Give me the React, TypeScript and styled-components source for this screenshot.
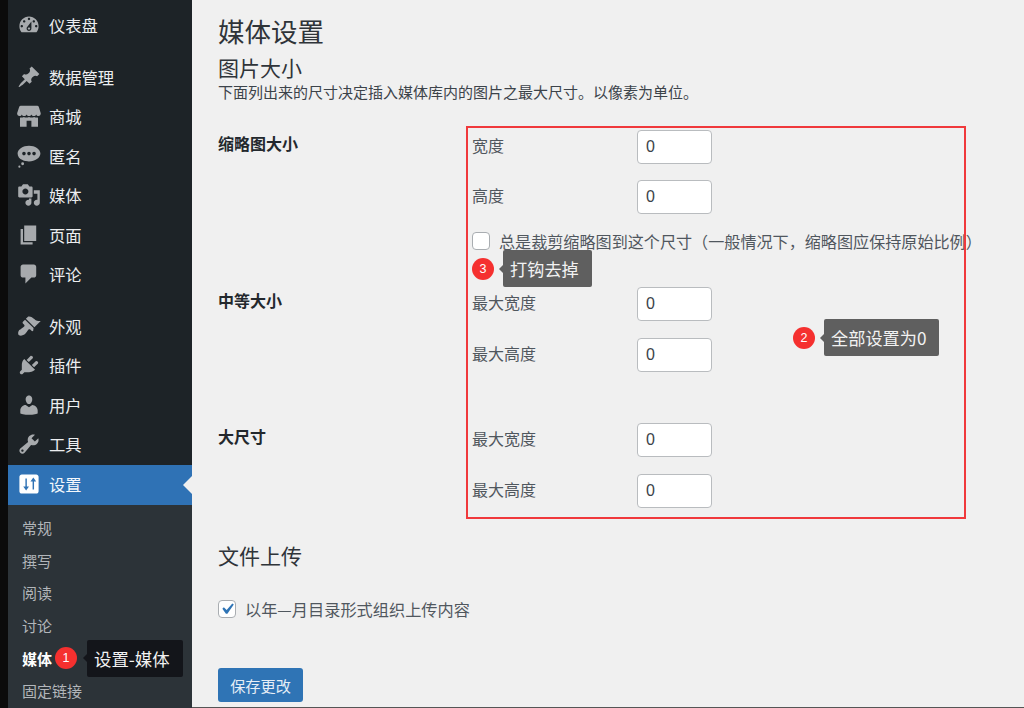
import React from 'react';
import styled, {createGlobalStyle} from 'styled-components';

const icons: Record<string, React.ReactNode> = {
    dashboard: <path fillRule="evenodd" d="M3.76 16h12.48c1.1-1.37 1.76-3.11 1.76-5 0-4.42-3.58-8-8-8s-8 3.58-8 8c0 1.89.66 3.63 1.76 5zM10 4c.55 0 1 .45 1 1s-.45 1-1 1-1-.45-1-1 .45-1 1-1zM6 6c.55 0 1 .45 1 1s-.45 1-1 1-1-.45-1-1 .45-1 1-1zm8 0c.55 0 1 .45 1 1s-.45 1-1 1-1-.45-1-1 .45-1 1-1zm-5.37 5.55L12 7v6c0 1.1-.9 2-2 2s-2-.9-2-2c0-.57.24-1.08.63-1.45zM4 10c.55 0 1 .45 1 1s-.45 1-1 1-1-.45-1-1 .45-1 1-1zm12 0c.55 0 1 .45 1 1s-.45 1-1 1-1-.45-1-1 .45-1 1-1zm-5 3c0-.55-.45-1-1-1s-1 .45-1 1 .45 1 1 1 1-.45 1-1z"/>,
    pin: <path d="M10.44 3.02l1.82-1.82 6.36 6.35-1.83 1.82c-1.05-.68-2.48-.57-3.41.36l-.75.75c-.92.93-1.04 2.35-.35 3.41l-1.83 1.82-2.41-2.41-2.8 2.79c-.42.42-3.38 2.71-3.8 2.29s1.86-3.39 2.28-3.81l2.79-2.79L4.1 9.36l1.83-1.82c1.05.69 2.48.57 3.4-.36l.75-.75c.93-.92 1.05-2.35.36-3.41z"/>,
    store: <path fillRule="evenodd" d="M3.2 1.5h13.6c.7 0 1.2.3 1.4.9l1.6 5.4c.1 1.3-.8 2.2-1.9 2.2-.9 0-1.6-.5-1.9-1.3-.3.8-1.1 1.3-2 1.3s-1.6-.5-2-1.3c-.4.8-1.1 1.3-2 1.3s-1.6-.5-2-1.3c-.4.8-1.1 1.3-2 1.3s-1.7-.5-2-1.3c-.3.8-1 1.3-1.9 1.3C.9 10 0 9.100.1 7.800l1.700-5.400c.2-.6.700-.9 1.400-.9zM2.500 11.300c.5.100 1 .1 1.500 0 .6 0 1.200-.2 1.700-.5 1.300.700 2.900.700 4.300 0 1.300.700 3 .700 4.300 0 .5.300 1.100.5 1.700.5.5.100 1 .1 1.500 0V19h-5.500v-5H8v5H2.500z"/>,
    chat: <path fillRule="evenodd" d="M10 1.500c5 0 9.500 2.800 9.500 6.500s-4.500 6.500-9.500 6.500c-.9 0-1.800-.1-2.600-.3-.9-.200-1.900-.2-2.800-.9C2 12.500.500 10.500.500 8c0-3.700 4.500-6.500 9.500-6.500zM5.800 6.500a1.500 1.500 0 1 0 0 3 1.500 1.500 0 0 0 0-3zm4.200 0a1.500 1.500 0 1 0 0 3 1.500 1.500 0 0 0 0-3zm4.200 0a1.500 1.500 0 1 0 0 3 1.500 1.500 0 0 0 0-3zM4.700 15.300a1.200 1.200 0 1 1 0 2.400 1.200 1.200 0 0 1 0-2.400zM2 18a.900.9 0 1 1 0 1.800A.900.9 0 0 1 2 18z"/>,
    media: <path fillRule="evenodd" d="M13 11V4c0-.55-.45-1-1-1h-1.670L9 1H5L3.670 3H2c-.55 0-1 .45-1 1v7c0 .55.45 1 1 1h10c.55 0 1-.45 1-1zM7 4.500c1.380 0 2.500 1.120 2.500 2.500S8.380 9.500 7 9.500 4.500 8.380 4.500 7 5.620 4.500 7 4.500zM14 6h5v10.500c0 1.380-1.120 2.500-2.500 2.500S14 17.880 14 16.500s1.120-2.500 2.500-2.500c.17 0 .34.020.5.050V9h-3V6zm-4 8.050V13h2v3.500c0 1.380-1.120 2.500-2.500 2.500S7 17.880 7 16.500 8.120 14 9.500 14c.17 0 .34.020.5.050z"/>,
    page: <path d="M6 15V2h10v13H6zm-1 1h8v2H3V5h2v11z"/>,
    comment: <path d="M5 2h9c1.100 0 2 .9 2 2v7c0 1.100-.9 2-2 2h-2l-5 5v-5H5c-1.100 0-2-.9-2-2V4c0-1.100.9-2 2-2z"/>,
    brush: <path d="M14.480 11.060L7.410 3.990l1.500-1.500c.5-.56 2.300-.47 3.510.32 1.210.8 1.430 1.280 2.910 2.100 1.180.64 2.450 1.260 4.450.85zm-.71.71L6.700 4.700 4.930 6.470c-.39.39-.39 1.020 0 1.410l1.060 1.060c.39.39.39 1.030 0 1.420-.6.6-1.430 1.110-2.210 1.690-.35.26-.7.53-1.010.84C1.430 13.230.75 15.110 1 16.710c.1.620.65 1.160 1.270 1.270 1.600.25 3.480-.43 4.830-1.770.31-.31.58-.66.84-1.010.58-.78 1.090-1.610 1.690-2.210.39-.39 1.030-.39 1.420 0l1.060 1.060c.39.39 1.020.39 1.410 0z"/>,
    plugin: <path d="M13.110 4.360L9.870 7.600 8 5.730l3.240-3.240c.35-.34 1.050-.2 1.560.32.52.51.66 1.210.31 1.550zm-8 1.770l.91-1.120 9.010 9.010-1.190.84c-.71.71-2.630 1.160-3.820 1.160H6.140L4.900 17.260c-.59.59-1.540.59-2.120 0-.59-.58-.59-1.530 0-2.120l1.240-1.240v-3.880c0-1.130.4-3.190 1.090-3.890zm7.260 3.970l3.240-3.240c.34-.35 1.040-.21 1.550.31.52.51.66 1.210.31 1.550l-3.240 3.250z"/>,
    user: <path d="M10 9.250c-2.270 0-2.730-3.440-2.730-3.440C7 4.020 7.820 2 9.970 2c2.160 0 2.980 2.020 2.710 3.810 0 0-.41 3.440-2.680 3.440zm0 2.570L12.720 10c2.390 0 4.520 2.330 4.520 4.530v2.490s-3.650 1.130-7.240 1.130c-3.650 0-7.240-1.130-7.240-1.130v-2.490c0-2.250 1.940-4.480 4.470-4.480z"/>,
    tools: <path fillRule="evenodd" d="M16.680 9.770c-1.340 1.340-3.300 1.670-4.950.99l-5.410 6.520c-.99.99-2.590.99-3.580 0s-.99-2.590 0-3.570l6.520-5.420c-.68-1.650-.35-3.610.99-4.950 1.280-1.280 3.120-1.620 4.720-1.060l-2.890 2.890 2.820 2.820 2.860-2.870c.53 1.580.18 3.390-1.080 4.650zM3.810 16.210c.4.39 1.040.39 1.430 0 .4-.4.4-1.040 0-1.430-.39-.4-1.030-.4-1.430 0-.39.39-.39 1.030 0 1.430z"/>,
    settings: <path fillRule="evenodd" d="M18 16V4c0-1.100-.9-2-2-2H4c-1.100 0-2 .9-2 2v12c0 1.100.9 2 2 2h12c1.100 0 2-.9 2-2zM7 5.500h1.200V12H10l-2.400 3.500L5.200 12H7zM13 14.500V8h-1.800l2.400-3.500L16 8h-1.800v6.500z"/>,
};

type MenuEntry = {icon: string; label: string; gapBefore?: boolean; active?: boolean};

const menu: MenuEntry[] = [
    {icon: 'dashboard', label: '仪表盘'},
    {icon: 'pin', label: '数据管理', gapBefore: true},
    {icon: 'store', label: '商城'},
    {icon: 'chat', label: '匿名'},
    {icon: 'media', label: '媒体'},
    {icon: 'page', label: '页面'},
    {icon: 'comment', label: '评论'},
    {icon: 'brush', label: '外观', gapBefore: true},
    {icon: 'plugin', label: '插件'},
    {icon: 'user', label: '用户'},
    {icon: 'tools', label: '工具'},
    {icon: 'settings', label: '设置', active: true},
];

const submenu = ['常规', '撰写', '阅读', '讨论', '媒体', '固定链接'];

const sections = [
    {title: '缩略图大小', fields: ['宽度', '高度'], gap: 28, fieldGap: 16},
    {title: '中等大小', fields: ['最大宽度', '最大高度'], gap: 37, fieldGap: 17},
    {title: '大尺寸', fields: ['最大宽度', '最大高度'], gap: 51, fieldGap: 17},
];

export default function App() {
    return (
        <>
            <GlobalStyle/>
            <Shell>
                <Sidebar>
                    <MenuList>
                        {menu.map(item => (
                            <MenuItem key={item.label} $gap={item.gapBefore} $active={item.active}>
                                <IconSlot $active={item.active}>
                                    <svg width="24" height="24" viewBox="0 0 20 20" fill="currentColor">
                                        {icons[item.icon]}
                                    </svg>
                                </IconSlot>
                                {item.label}
                            </MenuItem>
                        ))}
                    </MenuList>
                    <SubMenu>
                        {submenu.map(label => (
                            <SubItem key={label} $current={label === '媒体'}>
                                {label}
                                {label === '媒体' && (
                                    <>
                                        <SideBadge>1</SideBadge>
                                        <SideTip>设置-媒体</SideTip>
                                    </>
                                )}
                            </SubItem>
                        ))}
                    </SubMenu>
                </Sidebar>

                <Main>
                    <PageTitle>媒体设置</PageTitle>
                    <SectionTitle>图片大小</SectionTitle>
                    <Description>下面列出来的尺寸决定插入媒体库内的图片之最大尺寸。以像素为单位。</Description>

                    {sections.map((section, index) => (
                        <SizeSection key={section.title} $gap={section.gap}>
                            <SizeTitle>{section.title}</SizeTitle>
                            <div>
                                <FieldList $gap={section.fieldGap}>
                                    {section.fields.map(field => (
                                        <Field key={field}>
                                            <FieldLabel>{field}</FieldLabel>
                                            <NumberInput readOnly value="0"/>
                                        </Field>
                                    ))}
                                </FieldList>
                                {index === 0 && (
                                    <CropRow>
                                        <CheckBox/>
                                        总是裁剪缩略图到这个尺寸（一般情况下，缩略图应保持原始比例）
                                    </CropRow>
                                )}
                            </div>
                        </SizeSection>
                    ))}

                    <UploadTitle>文件上传</UploadTitle>
                    <UploadRow>
                        <CheckBox>
                            <svg width="22" height="22" viewBox="0 0 20 20" fill="#2f74b5">
                                <path d="M14.830 4.890l1.340.94-5.810 8.380H9.020L5.780 9.670l1.340-1.250 2.570 2.400z"/>
                            </svg>
                        </CheckBox>
                        以年—月目录形式组织上传内容
                    </UploadRow>
                    <SaveButton>保存更改</SaveButton>

                    <RedFrame/>
                    <Note $left={280} $top={250}>
                        <NoteBadge>3</NoteBadge>
                        <NoteTip>打钩去掉</NoteTip>
                    </Note>
                    <Note $left={601} $top={319}>
                        <NoteBadge>2</NoteBadge>
                        <NoteTip>全部设置为0</NoteTip>
                    </Note>
                </Main>
            </Shell>
        </>
    );
}

const GlobalStyle = createGlobalStyle`
  html, body {
    margin: 0;
    padding: 0;
    height: 708px;
    overflow: hidden;
    background: #0b0b0b;
  }

  * {
    box-sizing: border-box;
  }

  body {
    font-family: "Noto Sans CJK SC", "Liberation Sans", sans-serif;
  }
`

const Shell = styled.div`
  width: 1024px;
  height: 708px;
  display: flex;
  padding-left: 8px;
  background-color: #0b0b0b;
`

const Sidebar = styled.aside`
  width: 184px;
  flex-shrink: 0;
  display: flex;
  flex-direction: column;
  background-color: #1d2327;
`

const MenuList = styled.ul`
  list-style: none;
  margin: 0;
  padding: 6.5px 0 0;
`

const MenuItem = styled.li<{$gap?: boolean; $active?: boolean}>`
  position: relative;
  display: flex;
  align-items: center;
  height: 39.5px;
  padding-bottom: 2px;
  margin-top: ${p => p.$gap ? '12px' : '0'};
  font-size: 16.3px;
  color: ${p => p.$active ? '#f4f8fc' : '#eceef0'};
  background-color: ${p => p.$active ? '#2f72b5' : 'transparent'};

  ${p => p.$active && `
    &::after {
      content: '';
      position: absolute;
      right: 0;
      top: 50%;
      margin-top: -9px;
      border: 9px solid transparent;
      border-left-width: 0;
      border-right-color: #f0f0f0;
    }
  `}
`

const IconSlot = styled.span<{$active?: boolean}>`
  width: 41px;
  flex-shrink: 0;
  display: flex;
  justify-content: center;
  color: ${p => p.$active ? '#ffffff' : '#a7aaad'};
`

const SubMenu = styled.ul`
  list-style: none;
  margin: 0;
  padding: 6.5px 0 0 14px;
  flex: 1;
  background-color: #2c3338;
`

const SubItem = styled.li<{$current?: boolean}>`
  display: flex;
  align-items: center;
  height: 32.7px;
  font-size: 15px;
  font-weight: ${p => p.$current ? 700 : 400};
  color: ${p => p.$current ? '#ffffff' : '#b2b6ba'};
`

const SideBadge = styled.span`
  width: 22px;
  height: 22px;
  margin-left: 3px;
  flex-shrink: 0;
  display: flex;
  align-items: center;
  justify-content: center;
  border-radius: 50%;
  background-color: #f5302f;
  color: #ffffff;
  font: 400 12.5px "Liberation Sans", sans-serif;
`

const SideTip = styled.span`
  position: relative;
  width: 96px;
  height: 37px;
  flex-shrink: 0;
  margin-left: 10px;
  padding-left: 7px;
  display: flex;
  align-items: center;
  border-radius: 2px;
  background-color: #13151a;
  color: #f2f2f2;
  font-size: 17.4px;
  font-weight: 400;
  white-space: nowrap;

  &::before {
    content: '';
    position: absolute;
    left: -4px;
    top: 50%;
    margin-top: -4px;
    border: 4px solid transparent;
    border-left-width: 0;
    border-right-color: #13151a;
  }
`

const Main = styled.main`
  position: relative;
  flex: 1;
  height: 708px;
  padding: 12.5px 0 0 26px;
  background-color: #f0f0f0;
  border-bottom: 1px solid #555;
  color: #3c434a;
`

const PageTitle = styled.h1`
  margin: 0 0 5.5px;
  font-size: 26.5px;
  font-weight: 400;
  line-height: 36px;
  color: #2f3439;
`

const SectionTitle = styled.h2`
  margin: 0 0 1px;
  font-size: 21px;
  font-weight: 400;
  line-height: 27px;
  color: #2f3439;
`

const Description = styled.p`
  margin: 0;
  font-size: 15px;
  line-height: 20px;
  color: #3c434a;
`

const SizeSection = styled.section<{$gap: number}>`
  display: grid;
  grid-template-columns: 254px 1fr;
  margin-top: ${p => p.$gap}px;
`

const SizeTitle = styled.h3`
  margin: -1px 0 0;
  font-size: 16px;
  font-weight: 700;
  line-height: 28px;
  color: #23282d;
`

const FieldList = styled.div<{$gap: number}>`
  display: flex;
  flex-direction: column;
  gap: ${p => p.$gap}px;
`

const Field = styled.label`
  display: flex;
  align-items: center;
  font-size: 16px;
  color: #50575e;
`

const FieldLabel = styled.span`
  width: 165px;
  flex-shrink: 0;
  margin-bottom: 4px;
`

const NumberInput = styled.input`
  width: 75px;
  height: 34px;
  padding: 0 8px;
  background-color: #ffffff;
  border: 1px solid #b9bcbf;
  border-radius: 4px;
  font: 400 16px "Liberation Sans", sans-serif;
  color: #3c434a;
`

const CropRow = styled.label`
  display: flex;
  align-items: center;
  gap: 9px;
  height: 18px;
  margin-top: 18px;
  white-space: nowrap;
  font-size: 16.1px;
  color: #50575e;
`

const CheckBox = styled.span`
  width: 18px;
  height: 18px;
  flex-shrink: 0;
  display: flex;
  align-items: center;
  justify-content: center;
  background-color: #ffffff;
  border: 1px solid #a9adb1;
  border-radius: 4px;

  svg {
    flex-shrink: 0;
  }
`

const UploadTitle = styled(SectionTitle)`
  margin-top: 33.5px;
`

const UploadRow = styled(CropRow)`
  margin-top: 31px;
  font-size: 16.2px;
`

const SaveButton = styled.button`
  display: block;
  width: 85px;
  height: 34px;
  margin-top: 50px;
  padding: 0;
  background-color: #2f74b5;
  border: 0;
  border-radius: 3px;
  color: #e6eef6;
  font: 400 15.2px "Noto Sans CJK SC", sans-serif;
`

const RedFrame = styled.div`
  position: absolute;
  left: 274px;
  top: 125.5px;
  width: 500px;
  height: 393px;
  border: 2px solid #f0393c;
  pointer-events: none;
`

const Note = styled.div<{$left: number; $top: number}>`
  position: absolute;
  left: ${p => p.$left}px;
  top: ${p => p.$top}px;
  display: flex;
  align-items: center;
  gap: 9px;
`

const NoteBadge = styled.span`
  width: 22px;
  height: 22px;
  display: flex;
  align-items: center;
  justify-content: center;
  border-radius: 50%;
  background-color: #f5302f;
  color: #ffffff;
  font: 400 12.5px "Liberation Sans", sans-serif;
`

const NoteTip = styled.span`
  position: relative;
  height: 37px;
  padding: 0 13px 0 7px;
  display: flex;
  align-items: center;
  border-radius: 2px;
  background-color: #5f5f5f;
  color: #f2f2f2;
  font-size: 17.2px;
  white-space: nowrap;

  &::before {
    content: '';
    position: absolute;
    left: -4px;
    top: 50%;
    margin-top: -4px;
    border: 4px solid transparent;
    border-left-width: 0;
    border-right-color: #5f5f5f;
  }
`
